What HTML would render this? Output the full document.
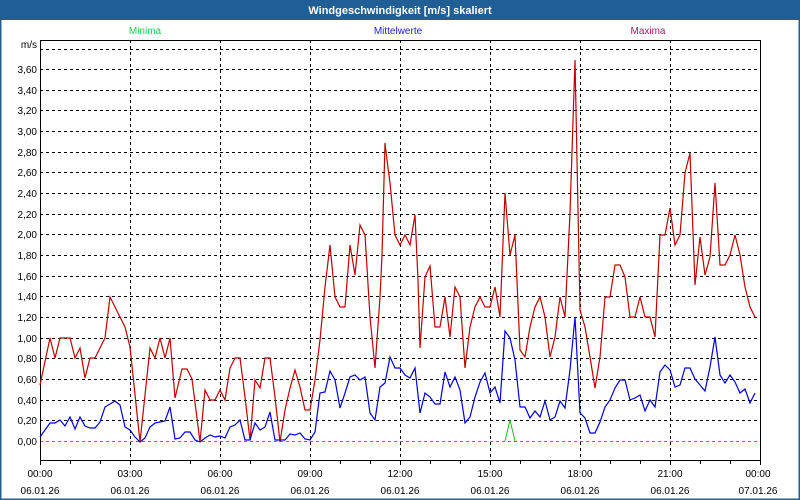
<!DOCTYPE html>
<html><head><meta charset="utf-8"><style>
html,body{margin:0;padding:0;background:#fff;}
svg{display:block;font-family:"Liberation Sans",sans-serif;}
</style></head><body>
<svg width="800" height="500" viewBox="0 0 800 500" xmlns="http://www.w3.org/2000/svg">
<rect x="0" y="0" width="800" height="500" fill="#fff"/>
<rect x="0.5" y="0.5" width="799" height="499" fill="none" stroke="#1f5f96" stroke-width="2"/>
<rect x="0" y="0" width="800" height="20" fill="#1f5f96"/>
<text x="400" y="14" fill="#fff" font-size="11" font-weight="bold" text-anchor="middle">Windgeschwindigkeit [m/s] skaliert</text>
<text x="145" y="34" fill="#22cc55" font-size="10" text-anchor="middle">Minima</text>
<text x="398" y="34" fill="#2020e0" font-size="10" text-anchor="middle">Mittelwerte</text>
<text x="648" y="34" fill="#a0206a" font-size="10" text-anchor="middle">Maxima</text>
<g stroke="#000" stroke-width="1" stroke-dasharray="3,3" fill="none">
<path d="M40 49.5H760M40 69.5H760M40 90.5H760M40 110.5H760M40 131.5H760M40 152.5H760M40 172.5H760M40 193.5H760M40 214.5H760M40 234.5H760M40 255.5H760M40 276.5H760M40 296.5H760M40 317.5H760M40 338.5H760M40 358.5H760M40 379.5H760M40 400.5H760M40 420.5H760"/>
<path d="M130.5 40V460M220.5 40V460M310.5 40V460M400.5 40V460M490.5 40V460M580.5 40V460M670.5 40V460"/>
</g>
<path d="M40 441.5H760" stroke="#22aa22" stroke-width="1" stroke-dasharray="3,3"/>
<path d="M40.5 40V460.5H760.5V40M40 40.5H760" stroke="#000" fill="none"/>
<g stroke="#000"><path d="M40.5 460v5M70.5 460v4M100.5 460v4M130.5 460v5M160.5 460v4M190.5 460v4M220.5 460v5M250.5 460v4M280.5 460v4M310.5 460v5M340.5 460v4M370.5 460v4M400.5 460v5M430.5 460v4M460.5 460v4M490.5 460v5M520.5 460v4M550.5 460v4M580.5 460v5M610.5 460v4M640.5 460v4M670.5 460v5M700.5 460v4M730.5 460v4M760.5 460v5"/></g>
<g font-size="10" fill="#000" text-anchor="end">
<text x="37" y="48">m/s</text>
<text x="37" y="73">3,60</text><text x="37" y="94">3,40</text><text x="37" y="114">3,20</text><text x="37" y="135">3,00</text><text x="37" y="156">2,80</text><text x="37" y="176">2,60</text><text x="37" y="197">2,40</text><text x="37" y="218">2,20</text><text x="37" y="238">2,00</text><text x="37" y="259">1,80</text><text x="37" y="280">1,60</text><text x="37" y="300">1,40</text><text x="37" y="321">1,20</text><text x="37" y="342">1,00</text><text x="37" y="362">0,80</text><text x="37" y="383">0,60</text><text x="37" y="404">0,40</text><text x="37" y="424">0,20</text><text x="37" y="445">0,00</text>
</g>
<g font-size="10" fill="#000" text-anchor="middle">
<text x="40" y="477">00:00</text><text x="40" y="494">06.01.26</text>
<text x="130" y="477">03:00</text><text x="130" y="494">06.01.26</text>
<text x="220" y="477">06:00</text><text x="220" y="494">06.01.26</text>
<text x="310" y="477">09:00</text><text x="310" y="494">06.01.26</text>
<text x="400" y="477">12:00</text><text x="400" y="494">06.01.26</text>
<text x="490" y="477">15:00</text><text x="490" y="494">06.01.26</text>
<text x="580" y="477">18:00</text><text x="580" y="494">06.01.26</text>
<text x="670" y="477">21:00</text><text x="670" y="494">06.01.26</text>
<text x="758" y="477">00:00</text><text x="758" y="494">07.01.26</text>
</g>
<path d="M505 441L510 420L515 441" stroke="#22bb22" fill="none"/>
<polyline fill="none" stroke="#c00000" stroke-width="1.2" points="40,385 50,338 55,358 60,338 70,338 75,358 80,348 85,378 90,358 95,358 105,338 110,297 115,307 125,327 130,347 140,442 150,348 155,358 160,338 165,358 170,338 175,398 182,369 187,369 192,379 200,442 205,390 210,400 215,400 220,390 225,400 230,368 235,358 240,358 245,397 250,440 255,380 260,388 265,358 270,358 275,397 280,442 285,410 290,388 295,370 300,387 305,410 310,410 315,380 320,340 325,287 330,245 335,297 340,307 345,307 350,245 355,275 360,225 365,235 370,317 375,368 380,297 382,255 385,143 387,160 390,183 395,235 400,245 405,235 410,245 415,215 418,280 420,348 425,277 430,266 435,327 440,327 445,297 450,337 455,287 460,297 465,368 470,327 475,307 480,297 485,307 490,307 495,287 500,317 505,193 510,255 515,235 520,350 525,357 530,327 535,307 540,297 545,317 550,357 555,337 560,297 565,317 570,213 575,60 580,310 585,327 590,357 595,388 600,357 605,297 610,297 615,265 620,265 625,277 630,317 635,317 640,297 645,317 650,317 655,337 660,235 665,235 670,208 675,245 680,235 685,173 690,153 695,285 700,237 705,275 710,257 715,183 720,265 725,265 730,255 735,235 740,255 745,287 750,307 755,317"/>
<polyline fill="none" stroke="#0000e0" stroke-width="1.2" points="40,437 50,423 55,423 60,420 65,426 70,417 75,429 80,417 85,426 90,428 95,428 100,422 105,407 110,404 115,401 120,405 125,427 130,430 135,437 140,442 145,438 150,427 155,423 160,422 165,421 170,407 175,439 180,438 185,432 190,432 195,440 200,442 205,438 210,435 215,437 220,436 225,438 230,427 235,425 240,420 245,440 250,440 255,423 260,430 265,427 270,412 275,440 285,440 290,434 295,435 300,433 305,439 310,440 315,432 320,393 325,392 330,371 335,380 340,408 345,393 350,377 355,375 360,380 365,377 370,413 375,420 380,387 385,383 390,357 395,368 400,368 405,375 410,378 415,368 420,413 425,393 430,397 435,404 440,404 445,372 450,387 455,377 460,390 465,423 470,417 475,397 480,382 485,373 490,393 495,387 500,403 505,331 510,338 515,360 520,407 525,407 530,418 535,411 540,417 545,401 550,420 555,417 560,401 565,408 570,370 575,317 580,413 585,418 590,433 595,433 600,422 605,407 610,400 615,388 620,380 625,380 630,400 635,398 640,395 645,411 650,400 655,407 660,372 665,365 670,370 675,387 680,385 685,368 690,368 695,379 700,385 705,391 710,367 715,337 720,375 725,383 730,375 735,382 740,393 745,389 750,403 755,393"/>
</svg>
</body></html>
